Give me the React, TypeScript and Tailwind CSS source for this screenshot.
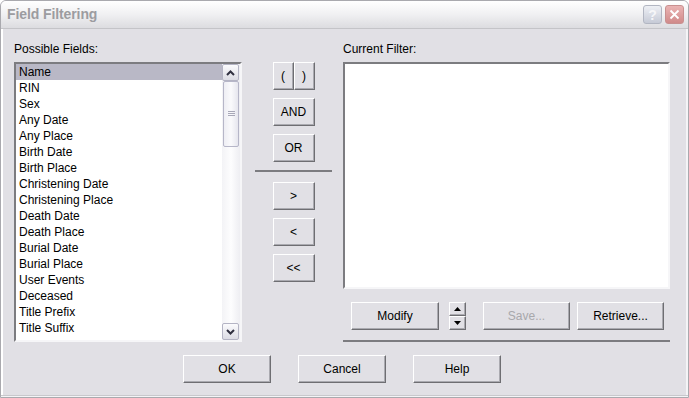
import React from "react";
import clsx from "clsx";

const fields = [
  "Name",
  "RIN",
  "Sex",
  "Any Date",
  "Any Place",
  "Birth Date",
  "Birth Place",
  "Christening Date",
  "Christening Place",
  "Death Date",
  "Death Place",
  "Burial Date",
  "Burial Place",
  "User Events",
  "Deceased",
  "Title Prefix",
  "Title Suffix",
];

function Btn({
  children,
  className,
  disabled,
}: {
  children?: React.ReactNode;
  className?: string;
  disabled?: boolean;
}) {
  return (
    <button
      disabled={disabled}
      className={clsx(
        "flex items-center justify-center bg-[#e1e0e5] border border-t-white border-l-white border-r-[#6e6e72] border-b-[#6e6e72] shadow-[inset_-1px_-1px_0_#aaaab0] text-[12px] leading-none",
        disabled ? "text-[#a8a8ac]" : "text-black",
        className
      )}
    >
      {children}
    </button>
  );
}

function Chevron({ up }: { up?: boolean }) {
  return (
    <svg width="9" height="6" viewBox="0 0 9 6">
      <polyline
        points={up ? "1,5 4.5,1.5 8,5" : "1,1 4.5,4.5 8,1"}
        fill="none"
        stroke="#303040"
        strokeWidth="2"
      />
    </svg>
  );
}

function ScrollBox({ up }: { up?: boolean }) {
  return (
    <div className="w-[17px] h-[17px] flex items-center justify-center rounded-[2px] border border-[#b4b4c4] bg-gradient-to-b from-[#fbfbfd] to-[#dcdce4]">
      <Chevron up={up} />
    </div>
  );
}

export default function App() {
  return (
    <div className="w-[689px] h-[398px] flex flex-col bg-[#e1e0e5] border border-[#a9a9ae] rounded-t-[6px] overflow-hidden font-['Liberation_Sans',Arial,sans-serif]">
      {/* title bar */}
      <div className="h-[28px] shrink-0 flex items-center pl-[6px] pr-[4px] bg-gradient-to-b from-[#ffffff] via-[#f0f0f2] to-[#dcdce0] border-b border-[#c4c4c8]">
        <span className="text-[14px] font-bold text-[#9c9ca0] tracking-[-0.1px]">Field Filtering</span>
        <div className="ml-auto flex gap-[3px]">
          <div className="w-[19px] h-[19px] rounded-[3px] border border-[#b2b6c2] bg-gradient-to-b from-[#eef0f5] to-[#c6cad6] flex items-center justify-center text-[14px] leading-none text-[#f6f6f8] font-bold">
            ?
          </div>
          <div className="w-[19px] h-[19px] rounded-[3px] border border-[#c89090] bg-gradient-to-b from-[#eab4b4] to-[#d08a8a] flex items-center justify-center">
            <svg width="11" height="11" viewBox="0 0 11 11">
              <path d="M1.5 1.5 L9.5 9.5 M9.5 1.5 L1.5 9.5" stroke="#fff" strokeWidth="1.8" />
            </svg>
          </div>
        </div>
      </div>

      {/* body */}
      <div className="flex-1 flex flex-col border-l-2 border-r-2 border-l-white border-r-[#f4f4f6] text-[12px] text-black">
        <div className="flex items-start pt-[13px] pl-[11px]">
          {/* left column */}
          <div className="w-[228px] flex flex-col">
            <div className="h-[14px] leading-[14px] mb-[6px]">Possible Fields:</div>
            <div className="h-[280px] flex bg-white border-2 border-t-[#7c7c80] border-l-[#7c7c80] border-r-[#f6f6f8] border-b-[#f6f6f8]">
              <div className="flex-1 flex flex-col">
                {fields.map((f, i) => (
                  <div
                    key={f}
                    className={clsx(
                      "h-[16px] leading-[16px] pl-[3px]",
                      i === 0 && "bg-[#b9b8c6]"
                    )}
                  >
                    {f}
                  </div>
                ))}
              </div>
              <div className="w-[18px] flex flex-col bg-gradient-to-r from-[#f3f3f6] via-[#fdfdfe] to-[#eeeef2]">
                <ScrollBox up />
                <div className="h-[66px] mx-[1px] rounded-[2px] border border-[#b6b6c8] bg-gradient-to-r from-[#eeeef4] via-[#fafafc] to-[#e6e6ee] flex items-center justify-center">
                  <svg width="7" height="6" viewBox="0 0 7 6">
                    <path d="M0 0.5H7M0 2.5H7M0 4.5H7" stroke="#a8a8b8" strokeWidth="1" />
                  </svg>
                </div>
                <div className="flex-1" />
                <ScrollBox />
              </div>
            </div>
          </div>

          {/* middle column */}
          <div className="w-[77px] ml-[13px] pt-[20px] flex flex-col items-center">
            <div className="flex">
              <Btn className="w-[21px] h-[28px]">(</Btn>
              <Btn className="w-[21px] h-[28px]">)</Btn>
            </div>
            <Btn className="w-[42px] h-[28px] mt-[8px]">AND</Btn>
            <Btn className="w-[42px] h-[28px] mt-[8px]">OR</Btn>
            <div className="w-[77px] h-[2px] bg-[#7c7c80] mt-[8px]" />
            <Btn className="w-[42px] h-[28px] mt-[10px] text-[10px]">&gt;</Btn>
            <Btn className="w-[42px] h-[28px] mt-[8px] text-[10px]">&lt;</Btn>
            <Btn className="w-[42px] h-[28px] mt-[8px] text-[10px]">&lt;&lt;</Btn>
          </div>

          {/* right column */}
          <div className="w-[327px] ml-[11px] flex flex-col">
            <div className="h-[14px] leading-[14px] mb-[6px]">Current Filter:</div>
            <div className="h-[227px] bg-white border-2 border-t-[#7c7c80] border-l-[#7c7c80] border-r-[#f6f6f8] border-b-[#f6f6f8]" />
            <div className="flex items-start mt-[13px] pl-[8px]">
              <Btn className="w-[88px] h-[28px]">Modify</Btn>
              <div className="ml-[10px] flex flex-col">
                <Btn className="w-[17px] h-[14px]">
                  <svg width="7" height="4" viewBox="0 0 7 4">
                    <polygon points="0,4 3.5,0 7,4" fill="#000" />
                  </svg>
                </Btn>
                <Btn className="w-[17px] h-[14px]">
                  <svg width="7" height="4" viewBox="0 0 7 4">
                    <polygon points="0,0 3.5,4 7,0" fill="#000" />
                  </svg>
                </Btn>
              </div>
              <Btn className="w-[87px] h-[28px] ml-[17px]" disabled>
                Save...
              </Btn>
              <Btn className="w-[87px] h-[28px] ml-[7px]">Retrieve...</Btn>
            </div>
            <div className="h-[2px] bg-[#7c7c80] mt-[10px]" />
          </div>
        </div>

        {/* bottom buttons */}
        <div className="flex pl-[180px] mt-[13px] gap-[27px]">
          <Btn className="w-[88px] h-[28px]">OK</Btn>
          <Btn className="w-[88px] h-[28px]">Cancel</Btn>
          <Btn className="w-[88px] h-[28px]">Help</Btn>
        </div>
      </div>
      <div className="h-[2px] shrink-0 bg-[#f4f4f6] border-t border-[#c8c8cc]" />
    </div>
  );
}
